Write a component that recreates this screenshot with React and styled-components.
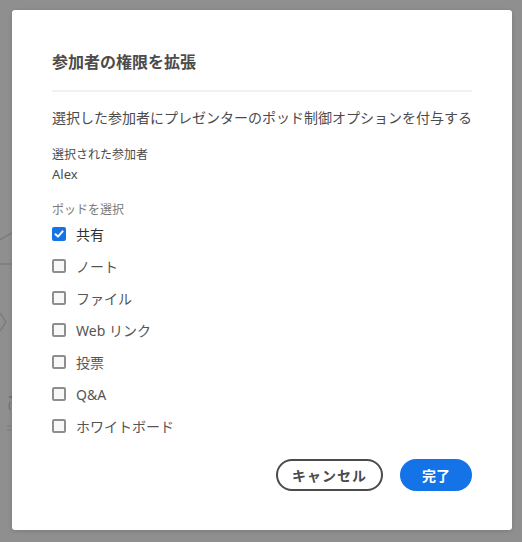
import React, { useState } from "react";
import styled, { createGlobalStyle } from "styled-components";

const GlobalStyle = createGlobalStyle`
  html, body {
    margin: 0;
    padding: 0;
    background: #8f8f8f;
  }
  body {
    font-family: "Noto Sans", "Noto Sans CJK JP", sans-serif;
  }
`;

const Overlay = styled.div`
  position: relative;
  width: 522px;
  height: 542px;
  background: #8f8f8f;
  padding: 10px 10px 12px 12px;
  box-sizing: border-box;
  overflow: hidden;
`;

const Backdrop = styled.svg`
  position: absolute;
  left: 0;
  top: 0;
`;

const Dialog = styled.div`
  position: relative;
  width: 500px;
  height: 520px;
  box-sizing: border-box;
  padding: 42px 40px 39px;
  background: #ffffff;
  border-radius: 3px;
  display: flex;
  flex-direction: column;
  box-shadow: 0 1px 4px rgba(0, 0, 0, 0.15);
`;

const Title = styled.h2`
  margin: 0;
  font-size: 16px;
  line-height: 20px;
  font-weight: 700;
  color: #4b4b4b;
`;

const Divider = styled.hr`
  margin: 18px 0 0;
  border: none;
  height: 2px;
  background: #f1f1f1;
`;

const Description = styled.p`
  margin: 16px 0 0;
  font-size: 14px;
  line-height: 20px;
  color: #4b4b4b;
  white-space: nowrap;
`;

const FieldLabel = styled.div`
  margin-top: ${(p) => p.$gap}px;
  font-size: 12px;
  line-height: 16px;
  color: ${(p) => (p.$muted ? "#7a7a7a" : "#4b4b4b")};
`;

const FieldValue = styled.div`
  margin-top: 3px;
  font-size: 13px;
  line-height: 16px;
  color: #4b4b4b;
`;

const OptionList = styled.div`
  display: flex;
  flex-direction: column;
`;

const OptionRow = styled.label`
  display: flex;
  align-items: center;
  gap: 10px;
  height: 32px;
  cursor: pointer;
  font-size: 14px;
  color: ${(p) => (p.$checked ? "#323232" : "#555555")};
`;

const Box = styled.span`
  width: 14px;
  height: 14px;
  box-sizing: border-box;
  border-radius: 2px;
  border: 2px solid ${(p) => (p.$checked ? "#1473e6" : "#8e8e8e")};
  background: ${(p) => (p.$checked ? "#1473e6" : "#f8f8f8")};
  display: flex;
  align-items: center;
  justify-content: center;
`;

const Footer = styled.div`
  margin-top: auto;
  display: flex;
  justify-content: flex-end;
  gap: 17px;
`;

const Button = styled.button`
  height: 32px;
  box-sizing: border-box;
  border-radius: 16px;
  font-family: "Noto Sans", "Noto Sans CJK JP", sans-serif;
  font-size: 14px;
  font-weight: 700;
  letter-spacing: ${(p) => (p.$primary ? "0" : "1px")};
  padding: 0 ${(p) => (p.$primary ? "20px" : "14px")};
  border: 2px solid ${(p) => (p.$primary ? "#1473e6" : "#4b4b4b")};
  background: ${(p) => (p.$primary ? "#1473e6" : "#ffffff")};
  color: ${(p) => (p.$primary ? "#ffffff" : "#4b4b4b")};
  cursor: pointer;
`;

const pods = ["共有", "ノート", "ファイル", "Web リンク", "投票", "Q&A", "ホワイトボード"];

function Checkbox({ checked }) {
  return (
    <Box $checked={checked}>
      {checked && (
        <svg width="10" height="10" viewBox="0 0 10 10">
          <polyline
            points="1.5,5.2 4,7.6 8.6,2.4"
            fill="none"
            stroke="#ffffff"
            strokeWidth="2"
            strokeLinecap="round"
            strokeLinejoin="round"
          />
        </svg>
      )}
    </Box>
  );
}

export default function App() {
  const [selected, setSelected] = useState({ 共有: true });

  return (
    <Overlay>
      <GlobalStyle />
      <Backdrop width="12" height="542">
        <path d="M0 240 Q6 236 12 233" stroke="#7c7c7c" strokeWidth="1.5" fill="none" />
        <line x1="0" y1="264" x2="12" y2="264" stroke="#7c7c7c" strokeWidth="1.5" />
        <path d="M0 313 L6 322 L0 331" stroke="#7c7c7c" strokeWidth="1.5" fill="none" />
        <line x1="9" y1="397" x2="12" y2="397" stroke="#555" strokeWidth="1" />
        <path d="M10 402 Q8 406 10 410" stroke="#6a6a6a" strokeWidth="1" fill="none" />
        <path d="M7 426 L11 426 M7 430 L11 430" stroke="#7c7c7c" strokeWidth="1" />
      </Backdrop>
      <Dialog>
        <Title>参加者の権限を拡張</Title>
        <Divider />
        <Description>選択した参加者にプレゼンターのポッド制御オプションを付与する</Description>
        <FieldLabel $gap={19}>選択された参加者</FieldLabel>
        <FieldValue>Alex</FieldValue>
        <FieldLabel $gap={20} $muted>ポッドを選択</FieldLabel>
        <OptionList>
          {pods.map((name) => (
            <OptionRow
              key={name}
              $checked={!!selected[name]}
              onClick={() => setSelected((s) => ({ ...s, [name]: !s[name] }))}
            >
              <Checkbox checked={!!selected[name]} />
              {name}
            </OptionRow>
          ))}
        </OptionList>
        <Footer>
          <Button>キャンセル</Button>
          <Button $primary>完了</Button>
        </Footer>
      </Dialog>
    </Overlay>
  );
}
